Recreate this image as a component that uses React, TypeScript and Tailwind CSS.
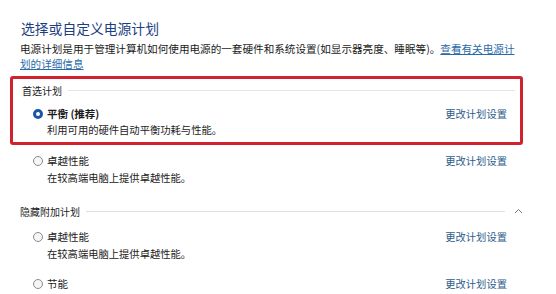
import React from 'react';

const FONT = "font-['Noto_Sans_CJK_SC','Noto_Sans',sans-serif]";

interface PlanProps {
  name: string;
  desc?: string;
  checked?: boolean;
  gapTop: string;
  descGap?: string;
}

function Radio({ checked }: { checked?: boolean }) {
  if (checked) {
    return <span className="w-[10px] h-[10px] rounded-full border-[3px] border-[#1a56a8] bg-white shrink-0" />;
  }
  return <span className="w-[10px] h-[10px] rounded-full border border-[#8a8a8a] bg-[#f6f6f6] shrink-0" />;
}

function Plan({ name, desc, checked, gapTop, descGap }: PlanProps) {
  return (
    <div className={gapTop}>
      <div className="flex items-center h-[16px] pl-[23px] w-[497px]">
        <Radio checked={checked} />
        <span className={`ml-[4px] text-[10.5px] text-[#1a1a1a] ${checked ? 'font-bold' : ''}`}>{name}</span>
        <span className="ml-auto text-[10.3px] text-[#2d5c8c] leading-[16px]">更改计划设置</span>
      </div>
      {desc && (
        <div className={`pl-[37px] h-[14px] leading-[14px] text-[10.3px] text-[#222] ${descGap ?? ''}`}>{desc}</div>
      )}
    </div>
  );
}

export default function App() {
  return (
    <div className={`w-[556px] h-[294px] bg-white overflow-hidden px-[10px] ${FONT}`}>
      <h1 className="pl-[11px] pt-[18px] h-[38px] leading-[20px] text-[13.8px] text-[#1c3d80]">
        选择或自定义电源计划
      </h1>
      <p className="pl-[10px] mt-[2.5px] whitespace-nowrap text-[10.6px] leading-[15px] text-[#1a1a1a]">
        电源计划是用于管理计算机如何使用电源的一套硬件和系统设置(如显示器亮度、睡眠等)。
        <span className="text-[#2b6aa8] underline">查看有关电源计</span>
        <br />
        <span className="text-[#2b6aa8] underline">划的详细信息</span>
      </p>

      <div className="mt-[5.5px] w-[513px] border-[3px] border-[#d1232f] rounded-[3px] pl-[9px] pr-[5px] pt-[4px] pb-[5px]">
        <div className="flex items-center h-[14px]">
          <span className="text-[10px] text-[#222]">首选计划</span>
          <span className="flex-1 h-px bg-[#e2e6e8] ml-[6px]" />
        </div>
        <div className="-ml-[12px]">
          <Plan name="平衡 (推荐)" desc="利用可用的硬件自动平衡功耗与性能。" checked gapTop="mt-[9px]" descGap="mt-[1px]" />
        </div>
      </div>

      <Plan name="卓越性能" desc="在较高端电脑上提供卓越性能。" gapTop="mt-[8px]" descGap="mt-[2px]" />

      <div className="mt-[19px] flex items-center h-[14px] pl-[10px]">
        <span className="text-[10px] text-[#222]">隐藏附加计划</span>
        <span className="w-[419px] h-px bg-[#e0e0e0] ml-[6px]" />
        <svg className="ml-[9px]" width="9" height="6" viewBox="0 0 9 6">
          <polyline points="1,5 4.5,1.5 8,5" fill="none" stroke="#777" strokeWidth="1" />
        </svg>
      </div>

      <Plan name="卓越性能" desc="在较高端电脑上提供卓越性能。" gapTop="mt-[11px]" descGap="mt-[2px]" />
      <Plan name="节能" gapTop="mt-[15px]" />
    </div>
  );
}
